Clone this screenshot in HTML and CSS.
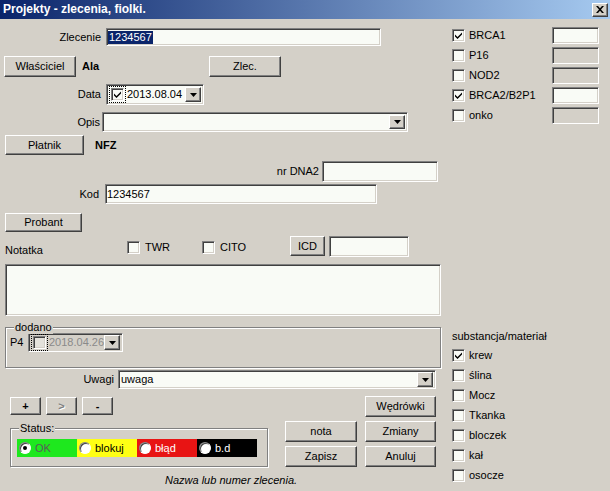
FILE: index.html
```html
<!DOCTYPE html>
<html lang="pl">
<head>
<meta charset="utf-8">
<title>Projekty - zlecenia, fiolki.</title>
<link rel="stylesheet" href="styles.css">
</head>
<body>
<div class="window">
  <div class="titlebar">
    <span class="title">Projekty - zlecenia, fiolki.</span>
    <span class="close-btn"><svg width="8" height="7" viewBox="0 0 8 7"><path d="M0 0h2l2 2.3L6 0h2L5 3.5 8 7H6L4 4.7 2 7H0l3-3.5z"/></svg></span>
  </div>
  <div class="client">
    <div class="left">
      <div class="row row-zlecenie">
        <span class="lbl lbl-zlecenie">Zlecenie</span>
        <div class="edit edit-zlecenie"><span class="selected">1234567</span></div>
      </div>
      <div class="row row-owner">
        <button class="btn btn-owner">Właściciel</button>
        <span class="bold owner-name">Ala</span>
        <button class="btn btn-zlec">Zlec.</button>
      </div>
      <div class="row row-data">
        <span class="lbl lbl-data">Data</span>
        <div class="picker picker-data">
          <span class="focus"><span class="chk"><svg class="tick" width="7" height="7" viewBox="0 0 7 7"><path d="M0 2.5L2.5 5 7 0.5V2.5L2.5 7 0 4.5z"/></svg></span></span>
          <span class="picker-text">2013.08.04</span>
          <span class="drop"><svg width="7" height="4" viewBox="0 0 7 4"><path d="M0 0h7L3.5 4z"/></svg></span>
        </div>
      </div>
      <div class="row row-opis">
        <span class="lbl lbl-opis">Opis</span>
        <div class="combo combo-opis">
          <span class="combo-text"></span>
          <span class="drop"><svg width="7" height="4" viewBox="0 0 7 4"><path d="M0 0h7L3.5 4z"/></svg></span>
        </div>
      </div>
      <div class="row row-platnik">
        <button class="btn btn-platnik">Płatnik</button>
        <span class="bold payer">NFZ</span>
      </div>
      <div class="row row-dna">
        <span class="lbl lbl-dna">nr DNA2</span>
        <div class="edit edit-dna"></div>
      </div>
      <div class="row row-kod">
        <span class="lbl lbl-kod">Kod</span>
        <div class="edit edit-kod">1234567</div>
      </div>
      <div class="row row-probant">
        <button class="btn btn-probant">Probant</button>
      </div>
      <div class="row row-notatka">
        <span class="notatka">Notatka</span>
        <span class="check-item twr"><span class="chk"></span><span>TWR</span></span>
        <span class="check-item cito"><span class="chk"></span><span>CITO</span></span>
        <button class="btn btn-icd">ICD</button>
        <div class="edit edit-icd"></div>
      </div>
      <div class="memo"></div>
      <div class="group group-dodano">
        <span class="group-title">dodano</span>
        <div class="row row-p4">
          <span class="p4">P4</span>
          <div class="picker picker-p4">
            <span class="focus"><span class="chk chk-disabled"></span></span>
            <span class="picker-text">2018.04.26</span>
            <span class="drop"><svg width="7" height="4" viewBox="0 0 7 4"><path d="M0 0h7L3.5 4z"/></svg></span>
          </div>
        </div>
      </div>
      <div class="row row-uwagi">
        <span class="lbl lbl-uwagi">Uwagi</span>
        <div class="combo combo-uwagi">
          <span class="combo-text">uwaga</span>
          <span class="drop"><svg width="7" height="4" viewBox="0 0 7 4"><path d="M0 0h7L3.5 4z"/></svg></span>
        </div>
      </div>
      <div class="bottom">
        <div class="bottom-left">
          <div class="nav-buttons">
            <button class="btn btn-nav">+</button>
            <button class="btn btn-nav btn-disabled">&gt;</button>
            <button class="btn btn-nav">-</button>
          </div>
          <div class="group group-status">
            <span class="group-title">Status:</span>
            <div class="status-strip">
              <span class="status st-ok"><span class="radio on"></span>OK</span>
              <span class="status st-block"><span class="radio"></span>blokuj</span>
              <span class="status st-err"><span class="radio"></span>błąd</span>
              <span class="status st-bd"><span class="radio"></span>b.d</span>
            </div>
          </div>
        </div>
        <div class="bottom-right">
          <button class="btn btn-wedrowki">Wędrówki</button>
          <button class="btn">nota</button>
          <button class="btn">Zmiany</button>
          <button class="btn">Zapisz</button>
          <button class="btn">Anuluj</button>
        </div>
      </div>
      <div class="hint">Nazwa lub numer zlecenia.</div>
    </div>
    <div class="right">
      <div class="genes">
        <div class="gene"><span class="chk"><svg class="tick" width="7" height="7" viewBox="0 0 7 7"><path d="M0 2.5L2.5 5 7 0.5V2.5L2.5 7 0 4.5z"/></svg></span><span class="gene-lbl">BRCA1</span><div class="edit gene-edit"></div></div>
        <div class="gene"><span class="chk"></span><span class="gene-lbl">P16</span><div class="edit gene-edit edit-disabled"></div></div>
        <div class="gene"><span class="chk"></span><span class="gene-lbl">NOD2</span><div class="edit gene-edit edit-disabled"></div></div>
        <div class="gene"><span class="chk"><svg class="tick" width="7" height="7" viewBox="0 0 7 7"><path d="M0 2.5L2.5 5 7 0.5V2.5L2.5 7 0 4.5z"/></svg></span><span class="gene-lbl">BRCA2/B2P1</span><div class="edit gene-edit"></div></div>
        <div class="gene"><span class="chk"></span><span class="gene-lbl">onko</span><div class="edit gene-edit edit-disabled"></div></div>
      </div>
      <div class="subst-title">substancja/materiał</div>
      <div class="subst">
        <div class="subst-item"><span class="chk"><svg class="tick" width="7" height="7" viewBox="0 0 7 7"><path d="M0 2.5L2.5 5 7 0.5V2.5L2.5 7 0 4.5z"/></svg></span><span>krew</span></div>
        <div class="subst-item"><span class="chk"></span><span>ślina</span></div>
        <div class="subst-item"><span class="chk"></span><span>Mocz</span></div>
        <div class="subst-item"><span class="chk"></span><span>Tkanka</span></div>
        <div class="subst-item"><span class="chk"></span><span>bloczek</span></div>
        <div class="subst-item"><span class="chk"></span><span>kał</span></div>
        <div class="subst-item"><span class="chk"></span><span>osocze</span></div>
      </div>
    </div>
  </div>
</div>
</body>
</html>
```

FILE: styles.css
```css
* { box-sizing: border-box; }
html, body { margin: 0; padding: 0; }
body {
  width: 610px;
  height: 491px;
  overflow: hidden;
  background: #d4d0c8;
  font-family: "Liberation Sans", Arial, sans-serif;
  font-size: 11px;
  line-height: 13px;
  color: #000;
}
.window { width: 610px; height: 491px; display: flex; flex-direction: column; }

/* title bar */
.titlebar {
  height: 19px;
  flex: none;
  background: linear-gradient(to right, #0a246a, #a6caf0);
  display: flex;
  align-items: center;
  justify-content: space-between;
  padding: 0 2px 0 3px;
}
.title { color: #fff; font-weight: bold; font-size: 12px; }
.close-btn {
  width: 16px;
  height: 14px;
  background: #d4d0c8;
  border: 1px solid;
  border-color: #fff #404040 #404040 #fff;
  box-shadow: inset -1px -1px 0 #808080;
  display: flex;
  align-items: center;
  justify-content: center;
}
.close-btn svg { fill: #000; display: block; }

.client { display: flex; flex: 1; }
.left { width: 452px; flex: none; display: flex; flex-direction: column; }
.right { flex: 1; display: flex; flex-direction: column; padding-top: 8px; }

.row { display: flex; align-items: center; flex: none; }
.lbl { text-align: right; flex: none; }
.bold { font-weight: bold; }

/* generic controls */
.btn {
  font: inherit;
  color: #000;
  background: #d4d0c8;
  border: 1px solid;
  border-color: #fff #404040 #404040 #fff;
  box-shadow: inset -1px -1px 0 #808080;
  padding: 0;
  margin: 0;
  height: 21px;
  display: flex;
  align-items: center;
  justify-content: center;
  flex: none;
}
.btn-disabled { color: #808080; text-shadow: 1px 1px 0 #fff; }

.edit {
  background: #f9fbf6;
  border: 1px solid;
  border-color: #808080 #fff #fff #808080;
  box-shadow: inset 1px 1px 0 #404040, inset -1px -1px 0 #d4d0c8;
  padding: 0 2px;
  display: flex;
  align-items: center;
  flex: none;
}
.edit-disabled { background: #d4d0c8; }

.chk {
  width: 13px;
  height: 13px;
  flex: none;
  background: #f9fbf6;
  border: 1px solid;
  border-color: #808080 #fff #fff #808080;
  box-shadow: inset 1px 1px 0 #404040, inset -1px -1px 0 #d4d0c8;
  display: flex;
  align-items: center;
  justify-content: center;
}
.tick { display: block; fill: #000; }
.chk-disabled { background: #e4e2dc; }

.radio {
  width: 12px;
  height: 12px;
  flex: none;
  border-radius: 50%;
  background: #fff;
  border: 1px solid;
  border-color: #808080 #fff #fff #808080;
  box-shadow: inset 1px 1px 0 #404040;
  display: flex;
  align-items: center;
  justify-content: center;
}
.radio.on::after {
  content: "";
  width: 4px;
  height: 4px;
  border-radius: 50%;
  background: #000;
}

.drop {
  width: 16px;
  height: 100%;
  flex: none;
  margin-left: auto;
  background: #d4d0c8;
  border: 1px solid;
  border-color: #fff #404040 #404040 #fff;
  box-shadow: inset -1px -1px 0 #808080;
  display: flex;
  align-items: center;
  justify-content: center;
}
.drop svg { display: block; fill: #000; }

.combo, .picker {
  background: #f9fbf6;
  border: 1px solid;
  border-color: #808080 #fff #fff #808080;
  box-shadow: inset 1px 1px 0 #404040, inset -1px -1px 0 #d4d0c8;
  padding: 2px;
  display: flex;
  align-items: center;
  flex: none;
}
.combo-text { padding-left: 0; }
.focus {
  border: 1px dotted #000;
  padding: 1px;
  display: flex;
  margin-left: 0;
}
.picker-text { margin-left: 1px; }

/* rows */
.row-zlecenie { margin-top: 9px; height: 18px; }
.lbl-zlecenie { width: 101px; }
.edit-zlecenie { margin-left: 5px; width: 275px; height: 18px; padding-left: 1px; }
.selected { background: #0a246a; color: #fff; padding: 0 1px; }

.row-owner { margin-top: 10px; height: 21px; }
.btn-owner { margin-left: 4px; width: 72px; }
.owner-name { margin-left: 6px; width: 127px; }
.btn-zlec { width: 72px; }

.row-data { margin-top: 7px; height: 21px; }
.lbl-data { width: 101px; }
.picker-data { margin-left: 5px; width: 98px; height: 21px; }

.row-opis { margin-top: 7px; height: 20px; }
.lbl-opis { width: 100px; }
.combo-opis { margin-left: 2px; width: 306px; height: 20px; }

.row-platnik { margin-top: 3px; height: 20px; }
.btn-platnik { margin-left: 5px; width: 79px; height: 20px; }
.payer { margin-left: 11px; }

.row-dna { margin-top: 6px; height: 21px; }
.lbl-dna { width: 319px; }
.edit-dna { margin-left: 3px; width: 116px; height: 21px; }

.row-kod { margin-top: 2px; height: 20px; }
.lbl-kod { width: 99px; }
.edit-kod { margin-left: 6px; width: 272px; height: 20px; padding-left: 1px; }

.row-probant { margin-top: 9px; height: 19px; }
.btn-probant { margin-left: 5px; width: 77px; height: 19px; }

.row-notatka { margin-top: 4px; height: 20px; }
.notatka { margin-left: 5px; width: 122px; align-self: flex-end; margin-bottom: -1px; }
.check-item { display: flex; align-items: center; gap: 5px; flex: none; margin-top: 2px; }
.twr { width: 75px; }
.cito { width: 88px; }
.btn-icd { width: 35px; height: 20px; }
.edit-icd { margin-left: 4px; width: 80px; height: 21px; }

.memo {
  margin-top: 8px;
  margin-left: 5px;
  width: 436px;
  height: 52px;
  flex: none;
  background: #f9fbf6;
  border: 1px solid;
  border-color: #808080 #fff #fff #808080;
  box-shadow: inset 1px 1px 0 #404040, inset -1px -1px 0 #d4d0c8;
}

/* group boxes */
.group {
  position: relative;
  flex: none;
  border: 1px solid #808080;
  box-shadow: 1px 1px 0 #fff, inset 1px 1px 0 #fff;
}
.group-title {
  position: absolute;
  top: -7px;
  background: #d4d0c8;
  padding: 0 1px;
  line-height: 13px;
}
.group-dodano {
  margin-top: 11px;
  margin-left: 5px;
  width: 436px;
  height: 41px;
  padding: 5px 0 0 4px;
}
.group-dodano .group-title { left: 8px; }
.row-p4 { height: 19px; }
.p4 { width: 18px; }
.picker-p4 { width: 95px; height: 19px; background: #d4d0c8; padding: 1px 2px; }
.picker-p4 .picker-text { color: #8a8a8a; }

.row-uwagi { margin-top: 2px; height: 19px; }
.lbl-uwagi { width: 114px; }
.combo-uwagi { margin-left: 4px; width: 318px; height: 19px; padding: 1px 2px; }

/* bottom */
.bottom { display: flex; margin-top: 7px; flex: none; }
.bottom-left { margin-left: 10px; width: 258px; display: flex; flex-direction: column; }
.nav-buttons { margin-top: 1px; display: flex; gap: 5px; }
.btn-nav { width: 31px; height: 18px; font-weight: bold; }
.group-status { margin-top: 13px; height: 39px; padding: 10px 0 0 6px; }
.group-status .group-title { left: 8px; }
.status-strip { display: flex; width: 240px; height: 18px; }
.status { width: 60px; display: flex; align-items: center; gap: 4px; padding-left: 2px; }
.st-ok { background: #1ee81e; color: #5a5a5a; }
.st-block { background: #ffff14; color: #000; }
.st-err { background: #e81414; color: #fff; }
.st-bd { background: #000; color: #fff; }

.bottom-right {
  margin-left: 17px;
  display: grid;
  grid-template-columns: 72px 71px;
  grid-auto-rows: 21px;
  column-gap: 8px;
  row-gap: 4px;
}
.bottom-right .btn { height: 21px; }
.btn-wedrowki { grid-column: 2; }

.hint { margin-top: 7px; padding-left: 165px; font-style: italic; }

/* right column */
.genes { display: flex; flex-direction: column; gap: 3px; }
.gene { display: flex; align-items: center; height: 17px; }
.gene-lbl { margin-left: 4px; width: 83px; }
.gene-edit { width: 47px; height: 17px; }

.subst-title { margin-top: 206px; }
.subst { margin-top: 6px; display: flex; flex-direction: column; gap: 7px; }
.subst-item { display: flex; align-items: center; gap: 4px; height: 13px; }
```
